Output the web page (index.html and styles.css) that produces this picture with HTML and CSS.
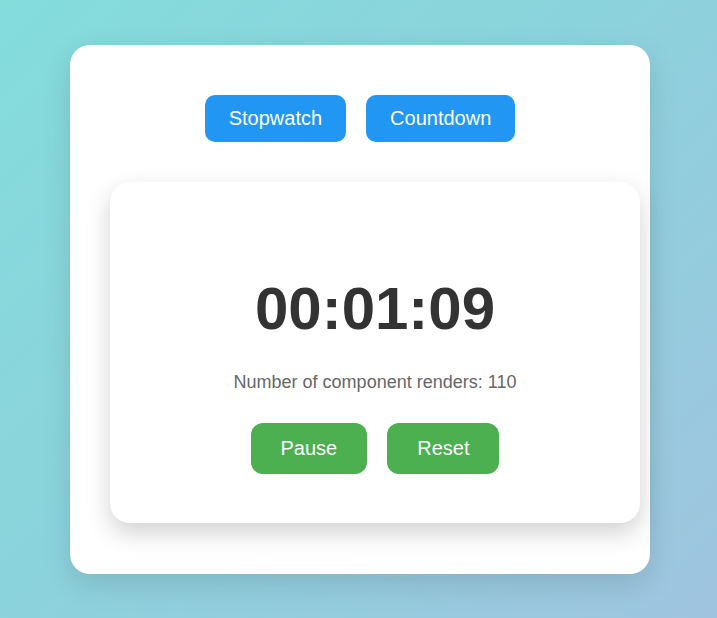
FILE: index.html
```html
<!DOCTYPE html>
<html lang="en">
<head>
<meta charset="utf-8">
<title>Timer</title>
<link rel="stylesheet" href="styles.css">
</head>
<body>
  <div class="app">
    <div class="modes">
      <button class="btn btn-blue btn-stop">Stopwatch</button>
      <button class="btn btn-blue btn-count">Countdown</button>
    </div>
    <div class="timer-card">
      <h1 class="time">00:01:09</h1>
      <p class="renders">Number of component renders: 110</p>
      <div class="controls">
        <button class="btn btn-green">Pause</button>
        <button class="btn btn-green">Reset</button>
      </div>
    </div>
  </div>
</body>
</html>
```
FILE: styles.css
```css
html, body {
  margin: 0;
  height: 100%;
}
body {
  background: linear-gradient(135deg, #84dcdb 0%, #8bd3dc 45%, #a0c4e0 100%);
  font-family: "Liberation Sans", Arial, sans-serif;
  overflow: hidden;
}
.app {
  box-sizing: border-box;
  width: 580px;
  margin: 45px 0 0 70px;
  padding: 50px 40px 51px;
  background: #fff;
  border-radius: 20px;
  box-shadow: 0 10px 30px rgba(0, 0, 0, 0.12);
}
.modes {
  display: flex;
  justify-content: center;
  gap: 20px;
  margin-bottom: 40px;
}
.btn {
  font-family: "Liberation Sans", Arial, sans-serif;
  font-size: 20px;
  line-height: 23px;
  color: #fff;
  border: none;
  border-radius: 10px;
  cursor: pointer;
}
.btn-blue {
  background: #2196f3;
  padding: 12px 24px;
}
.btn-green {
  background: #4caf50;
  padding: 14px 30px;
  border-radius: 12px;
}
.timer-card {
  width: 100%;
  padding: 50px 15px 49px;
  background: #fff;
  border-radius: 20px;
  box-shadow: 0 10px 25px rgba(0, 0, 0, 0.18);
  text-align: center;
}
.time {
  margin: 42px 0 29px;
  font-size: 60px;
  line-height: 69px;
  font-weight: bold;
  color: #333;
}
.renders {
  margin: 0 0 30px;
  font-size: 18px;
  line-height: 21px;
  color: #666;
}
.controls {
  display: flex;
  justify-content: center;
  gap: 20px;
}
```
